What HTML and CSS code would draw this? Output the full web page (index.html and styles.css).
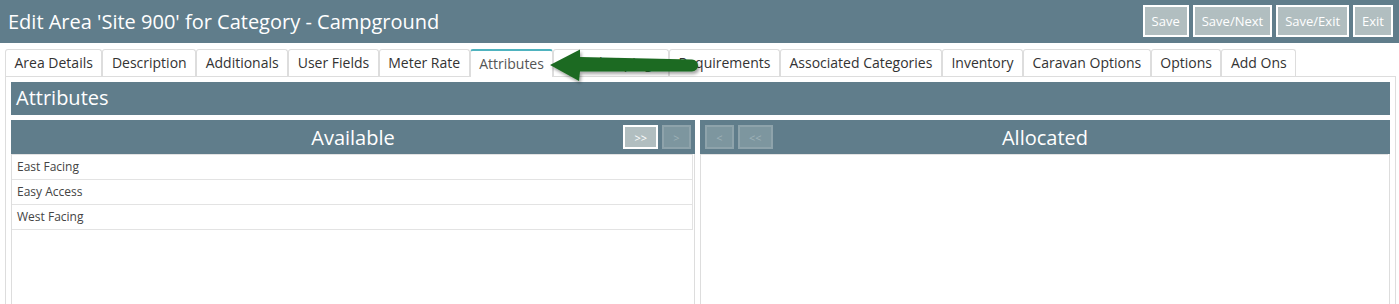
FILE: index.html
```html
<!DOCTYPE html>
<html lang="en">
<head>
    <meta charset="UTF-8">
    <meta name="viewport" content="width=device-width, initial-scale=1.0">
    <title>Edit Area</title>
    <link rel="stylesheet" href="styles.css">
</head>
<body>
    <header class="top-bar">
        <h1 class="page-title">Edit Area 'Site 900' for Category - Campground</h1>
        <div class="top-actions">
            <button class="top-btn">Save</button>
            <button class="top-btn">Save/Next</button>
            <button class="top-btn">Save/Exit</button>
            <button class="top-btn">Exit</button>
        </div>
    </header>

    <div class="page">
        <ul class="tabs">
            <li class="tab">Area Details</li>
            <li class="tab">Description</li>
            <li class="tab">Additionals</li>
            <li class="tab">User Fields</li>
            <li class="tab">Meter Rate</li>
            <li class="tab active">Attributes</li>
            <li class="tab tab-wide">Landscaping</li>
            <li class="tab">Requirements</li>
            <li class="tab">Associated Categories</li>
            <li class="tab">Inventory</li>
            <li class="tab">Caravan Options</li>
            <li class="tab">Options</li>
            <li class="tab">Add Ons</li>
        </ul>

        <div class="tab-panel">
            <div class="section-bar">Attributes</div>

            <div class="lists">
                <div class="list-box">
                    <div class="list-head">
                        <span></span>
                        <span class="list-title">Available</span>
                        <div class="move-btns end">
                            <button class="move-btn">&gt;&gt;</button>
                            <button class="move-btn off">&gt;</button>
                        </div>
                    </div>
                    <ul class="list-items">
                        <li>East Facing</li>
                        <li>Easy Access</li>
                        <li>West Facing</li>
                    </ul>
                </div>

                <div class="list-box">
                    <div class="list-head">
                        <div class="move-btns">
                            <button class="move-btn off">&lt;</button>
                            <button class="move-btn off">&lt;&lt;</button>
                        </div>
                        <span class="list-title">Allocated</span>
                        <span></span>
                    </div>
                    <ul class="list-items"></ul>
                </div>
            </div>
        </div>

        <!-- callout arrow pointing at the active tab -->
        <svg class="pointer-arrow" width="170" height="50" viewBox="540 42 170 50">
            <defs>
                <filter id="arrowShadow" x="-10%" y="-30%" width="130%" height="180%">
                    <feDropShadow dx="1.5" dy="2.5" stdDeviation="1.5" flood-color="#000" flood-opacity="0.35"/>
                </filter>
            </defs>
            <path d="M550 65 L580 49.5 L580 57 L692 59.5 A6 6 0 0 1 692 71.5 L580 71.5 L579 81 Z"
                  fill="#1d6b21" filter="url(#arrowShadow)"/>
        </svg>
    </div>
</body>
</html>
```

FILE: styles.css
```css
body {
    margin: 0;
    font-family: "Open Sans", Arial, sans-serif;
    background: #fff;
    color: #333;
}
.top-bar {
    display: flex;
    align-items: center;
    justify-content: space-between;
    height: 43px;
    padding: 0 6px 0 8px;
    background: #607d8b;
}
.page-title {
    margin: 0;
    font-size: 20px;
    font-weight: normal;
    color: #fff;
}
.top-actions {
    display: flex;
    gap: 4px;
    margin-top: -1px;
}
.top-btn {
    height: 32px;
    padding: 0 7px;
    border: 2px solid #fff;
    background: #b1bec0;
    color: #fff;
    font-family: "Open Sans", Arial, sans-serif;
    font-size: 13px;
    cursor: pointer;
}
.page {
    position: relative;
    padding: 6px 3px 0 5px;
}
.tabs {
    display: flex;
    margin: 0;
    padding: 0;
    list-style: none;
}
.tab {
    height: 26px;
    line-height: 26px;
    padding: 0 8.5px;
    border: 1px solid #ddd;
    border-bottom: none;
    border-radius: 3px 3px 0 0;
    font-size: 14px;
    color: #333;
    background: #fff;
}
.tab.active {
    position: relative;
    height: 26px;
    line-height: 25px;
    margin-bottom: -1px;
    border-top: 2px solid #4fb3bf;
    color: #555;
}
.tab-wide {
    padding: 0 16px;
}
.tab-panel {
    border: 1px solid #ddd;
    padding: 5px;
    min-height: 260px;
}
.section-bar {
    height: 33px;
    line-height: 31px;
    padding-left: 5px;
    background: #607d8b;
    color: #fff;
    font-size: 20px;
}
.lists {
    display: grid;
    grid-template-columns: 684px 1fr;
    gap: 5px;
    margin-top: 5px;
}
.list-box {
    border: 1px solid #ddd;
    border-top: none;
    min-height: 200px;
}
.list-head {
    display: grid;
    grid-template-columns: 1fr auto 1fr;
    align-items: center;
    height: 34px;
    margin: 0 -1px;
    background: #607d8b;
}
.list-title {
    font-size: 20px;
    color: #fff;
}
.move-btns {
    display: flex;
    gap: 4px;
    padding: 0 5px;
}
.move-btns.end {
    justify-content: flex-end;
    padding: 0 4px;
}
.move-btn {
    height: 24px;
    min-width: 29px;
    padding: 0 9px;
    border: 2px solid #fff;
    background: #b1bec0;
    color: #fff;
    font-family: "Open Sans", Arial, sans-serif;
    font-size: 11px;
}
.move-btn.off {
    border-color: #8ea3ab;
    background: #7d969f;
    color: #9fb2b8;
}
.list-items {
    margin: 0 1px 0 0;
    padding: 0;
    border-top: 1px solid #e3e3e3;
    list-style: none;
}
.list-items li {
    height: 24px;
    line-height: 24px;
    padding-left: 5px;
    border-bottom: 1px solid #e3e3e3;
    border-right: 1px solid #e3e3e3;
    font-size: 12px;
    color: #444;
}
.pointer-arrow {
    position: absolute;
    left: 540px;
    top: -1px;
}
```
